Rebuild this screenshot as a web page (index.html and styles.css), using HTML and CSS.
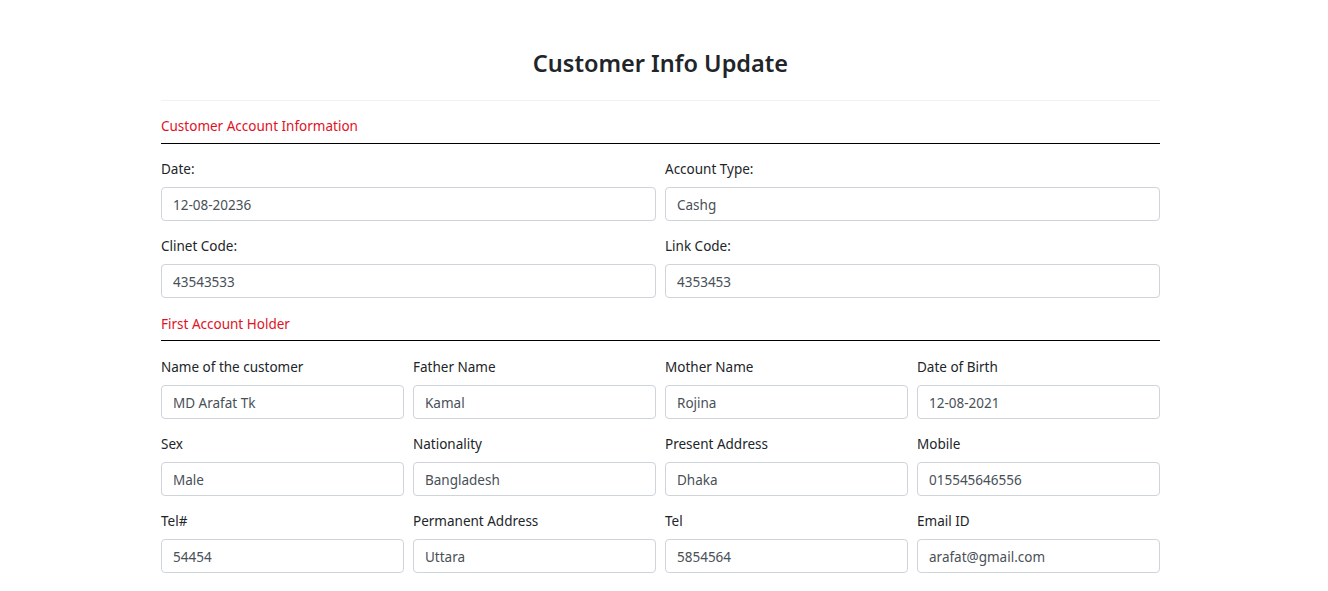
FILE: index.html
```html
<!DOCTYPE html>
<html>
<head>
<meta charset="utf-8">
<link rel="stylesheet" href="styles.css">
</head>
<body>
<div class="page">
  <h1 class="title">Customer Info Update</h1>
  <hr class="rule-light">
  <div class="section-title">Customer Account Information</div>
  <div class="grid grid-2">
    <div class="field"><label>Date:</label><input value="12-08-20236"></div>
    <div class="field"><label>Account Type:</label><input value="Cashg"></div>
    <div class="field"><label>Clinet Code:</label><input value="43543533"></div>
    <div class="field"><label>Link Code:</label><input value="4353453"></div>
  </div>
  <div class="section-title second">First Account Holder</div>
  <div class="grid grid-4">
    <div class="field"><label>Name of the customer</label><input value="MD Arafat Tk"></div>
    <div class="field"><label>Father Name</label><input value="Kamal"></div>
    <div class="field"><label>Mother Name</label><input value="Rojina"></div>
    <div class="field"><label>Date of Birth</label><input value="12-08-2021"></div>
    <div class="field"><label>Sex</label><input value="Male"></div>
    <div class="field"><label>Nationality</label><input value="Bangladesh"></div>
    <div class="field"><label>Present Address</label><input value="Dhaka"></div>
    <div class="field"><label>Mobile</label><input value="015545646556"></div>
    <div class="field"><label>Tel#</label><input value="54454"></div>
    <div class="field"><label>Permanent Address</label><input value="Uttara"></div>
    <div class="field"><label>Tel</label><input value="5854564"></div>
    <div class="field"><label>Email ID</label><input value="arafat@gmail.com"></div>
  </div>
</div>
</body>
</html>
```
FILE: styles.css
```css
* { box-sizing: border-box; }
body {
  margin: 0;
  background: #fff;
  font-family: "Noto Sans", "Open Sans", sans-serif;
  color: #212529;
  font-size: 13.5px;
}
.page {
  width: 999px;
  margin-left: 161px;
  padding-top: 46px;
}
.title {
  margin: 0;
  text-align: center;
  font-size: 23.5px;
  font-weight: 600;
  line-height: 34px;
  color: #212529;
}
.rule-light {
  margin: 20px 0 0;
  border: 0;
  border-top: 1px solid #f1f1f1;
}
.section-title {
  color: #e0121f;
  font-size: 13.5px;
  line-height: 20px;
  padding-top: 15px;
  padding-bottom: 7px;
  border-bottom: 1px solid #000;
  margin-bottom: 15px;
}
.section-title.second {
  padding-top: 16px;
  padding-bottom: 6px;
  margin-bottom: 16px;
}
.grid {
  display: grid;
  column-gap: 9px;
  row-gap: 15px;
}
.grid-2 { grid-template-columns: repeat(2, 1fr); }
.grid-4 { grid-template-columns: repeat(4, 1fr); }
.field { display: flex; flex-direction: column; }
.field label {
  line-height: 20px;
  margin-bottom: 8px;
}
.field input {
  height: 34px;
  border: 1px solid #ced4da;
  border-radius: 4px;
  padding: 2px 11px 0;
  font-family: inherit;
  font-size: 13.5px;
  color: #495057;
  background: #fff;
}
```
